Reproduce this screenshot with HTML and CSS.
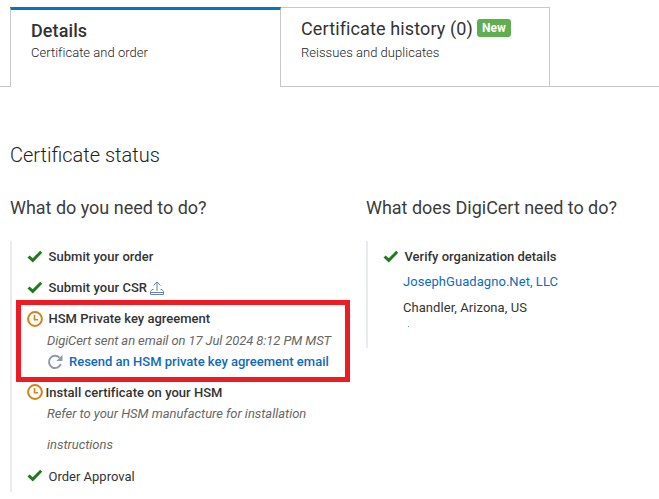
FILE: index.html
```html
<!DOCTYPE html>
<html lang="en">
<head>
<meta charset="utf-8">
<title>Certificate order details</title>
<link rel="stylesheet" href="styles.css">
</head>
<body>
<svg class="defs" width="0" height="0" aria-hidden="true">
  <symbol id="check" viewBox="0 0 16 14"><path d="M0.5 7.6 L2.7 5.4 L5.7 8.3 L13.2 0.8 L15.2 2.8 L5.8 12.6 Z"/></symbol>
  <symbol id="clock" viewBox="0 0 16 16"><circle cx="8" cy="8" r="6.9"/><path d="M7.5 4 V8.7 H11" stroke-width="1.6"/></symbol>
</svg>
<nav class="tabs">
  <a class="tab active"><span class="tab-title">Details</span><span class="tab-sub">Certificate and order</span></a>
  <a class="tab"><span class="tab-title"><span class="history">Certificate history (0)</span><span class="badge">New</span></span><span class="tab-sub dup">Reissues and duplicates</span></a>
  <div class="tab-rest"></div>
</nav>
<main>
  <h1>Certificate status</h1>
  <div class="columns">
    <section>
      <h2>What do you need to do?</h2>
      <div class="list todo">
        <div class="row"><svg class="check"><use href="#check"/></svg><b class="t-order">Submit your order</b></div>
        <div class="row"><svg class="check"><use href="#check"/></svg><b class="t-csr">Submit your CSR</b><svg class="upload" viewBox="0 0 14 14"><path d="M3.5 8.5 H2 L0.5 10.5 V13.5 H13.5 V10.5 L12 8.5 H10.5 M0.5 11.5 H13.5 M7 10 V1 M3.5 4.5 L7 1 L10.5 4.5"/></svg></div>
        <div class="row"><svg class="clock"><use href="#clock"/></svg><b>HSM Private key agreement</b></div>
        <div class="note sent">DigiCert sent an email on 17 Jul 2024 8:12 PM MST</div>
        <div class="resend"><svg class="refresh" viewBox="0 0 16 16"><path class="arc" d="M12.4 3.6 A6.1 6.1 0 1 0 13.8 10"/><path class="tip" d="M15.5 0.8 V7 H9.3 Z"/></svg><a>Resend an HSM private key agreement email</a></div>
        <div class="row install"><svg class="clock"><use href="#clock"/></svg><b class="t-install">Install certificate on your HSM</b></div>
        <div class="note refer">Refer to your HSM manufacture for installation<br>instructions</div>
        <div class="row last"><svg class="check"><use href="#check"/></svg><span class="approval">Order Approval</span></div>
        <div class="highlight"></div>
      </div>
    </section>
    <section class="vendor">
      <h2>What does DigiCert need to do?</h2>
      <div class="list org">
        <div class="row"><svg class="check"><use href="#check"/></svg><b>Verify organization details</b></div>
        <a class="org-line t-org">JosephGuadagno.Net, LLC</a>
        <div class="org-line">Chandler, Arizona, US</div>
        <div class="speck"></div>
      </div>
    </section>
  </div>
</main>
</body>
</html>
```
FILE: styles.css
```css
* { box-sizing: border-box; }
body { margin: 0; height: 499px; overflow: hidden; background: #fff; color: #333; font-family: Roboto, "Liberation Sans", sans-serif; font-size: 13px; white-space: nowrap; }
.defs { position: absolute; }
.tabs { display: flex; height: 80px; margin-top: 7px; padding-left: 10px; background: linear-gradient(#c8c8c8, #c8c8c8) left bottom / 10px 1px no-repeat; }
.tab { display: flex; flex-direction: column; width: 269px; padding: 9px 20px 0; border: 1px solid #c8c8c8; border-left: 0; color: #333; }
.tab.active { width: 271px; padding-top: 9px; border-left: 1px solid #c8c8c8; border-top: 3px solid #0174c3; border-bottom: 0; }
.tab-rest { flex: 1; border-bottom: 1px solid #c8c8c8; }
.tab-title { display: flex; align-items: center; height: 22px; font-size: 18px; }
.active .tab-title { font-weight: 500; letter-spacing: 0.1px; }
.history { letter-spacing: 0.12px; }
.tab-sub { height: 21px; margin-top: 1px; line-height: 21px; color: #222; font-weight: 300; letter-spacing: 0.03px; }
.tab:not(.active) .tab-sub { margin-top: 3px; }
.badge { width: 34px; height: 18px; margin-left: 4px; border-radius: 3px; background: #5fae50; color: #fff; font-size: 12px; font-weight: 700; line-height: 18px; text-align: center; }
main { padding: 55px 10px 0; }
h1, h2 { margin: 0; }
h1 { height: 26px; font-size: 20px; font-weight: 300; line-height: 26px; color: #222; }
.columns { display: flex; margin-top: 27px; }
section { flex: none; width: 356px; }
.vendor { width: 283px; }
h2 { height: 26px; margin-bottom: 20px; font-size: 18px; font-weight: 400; line-height: 26px; letter-spacing: -0.02px; color: #3c3c3c; }
.list { position: relative; padding-left: 17px; border-left: 2px solid #e8ecef; }
.todo { height: 251px; }
.org { height: 107px; }
.row { display: flex; align-items: center; height: 31px; margin-left: -2px; }
.row b { font-weight: 500; margin-left: -0.5px; }
.t-order, .t-csr { letter-spacing: 0.05px; }
.check { width: 16px; height: 14px; margin-right: 6px; fill: #1e7b1a; }
.clock { width: 16px; height: 16px; margin-right: 6px; fill: none; stroke: #d48317; stroke-width: 2; }
.upload { width: 14px; height: 14px; margin-left: 3px; fill: none; stroke: #5275ac; stroke-width: 0.9; }
.note { padding-left: 18px; color: #666; font-style: italic; }
.sent { height: 20px; margin-top: -3px; line-height: 20px; letter-spacing: -0.1px; }
.resend { display: flex; align-items: center; height: 21px; padding-left: 18px; }
.refresh { width: 16px; height: 16px; margin-right: 6px; }
.resend a { font-weight: 500; letter-spacing: 0; }
.arc { fill: none; stroke: #8f9ca2; stroke-width: 2; }
.tip { fill: #8f9ca2; }
.resend a, .t-org { color: #0d6bbd; }
.install { height: 22px; margin-top: 9px; }
.install .clock { margin-right: 3px; }
.t-install { letter-spacing: 0.02px; }
.refer { margin-top: -5px; line-height: 31px; letter-spacing: -0.04px; }
.last { height: 32px; }
.approval { margin-left: -0.5px; }
.highlight { position: absolute; left: 4px; top: 59px; width: 334px; height: 82px; border: 5px solid #ed1c24; }
.org-line { display: block; height: 26px; padding-left: 18px; line-height: 26px; letter-spacing: 0.06px; }
.t-org { margin-top: -3px; }
.speck { width: 1px; height: 1px; margin: 5px 0 0 23px; background: #7194bd; }
```
